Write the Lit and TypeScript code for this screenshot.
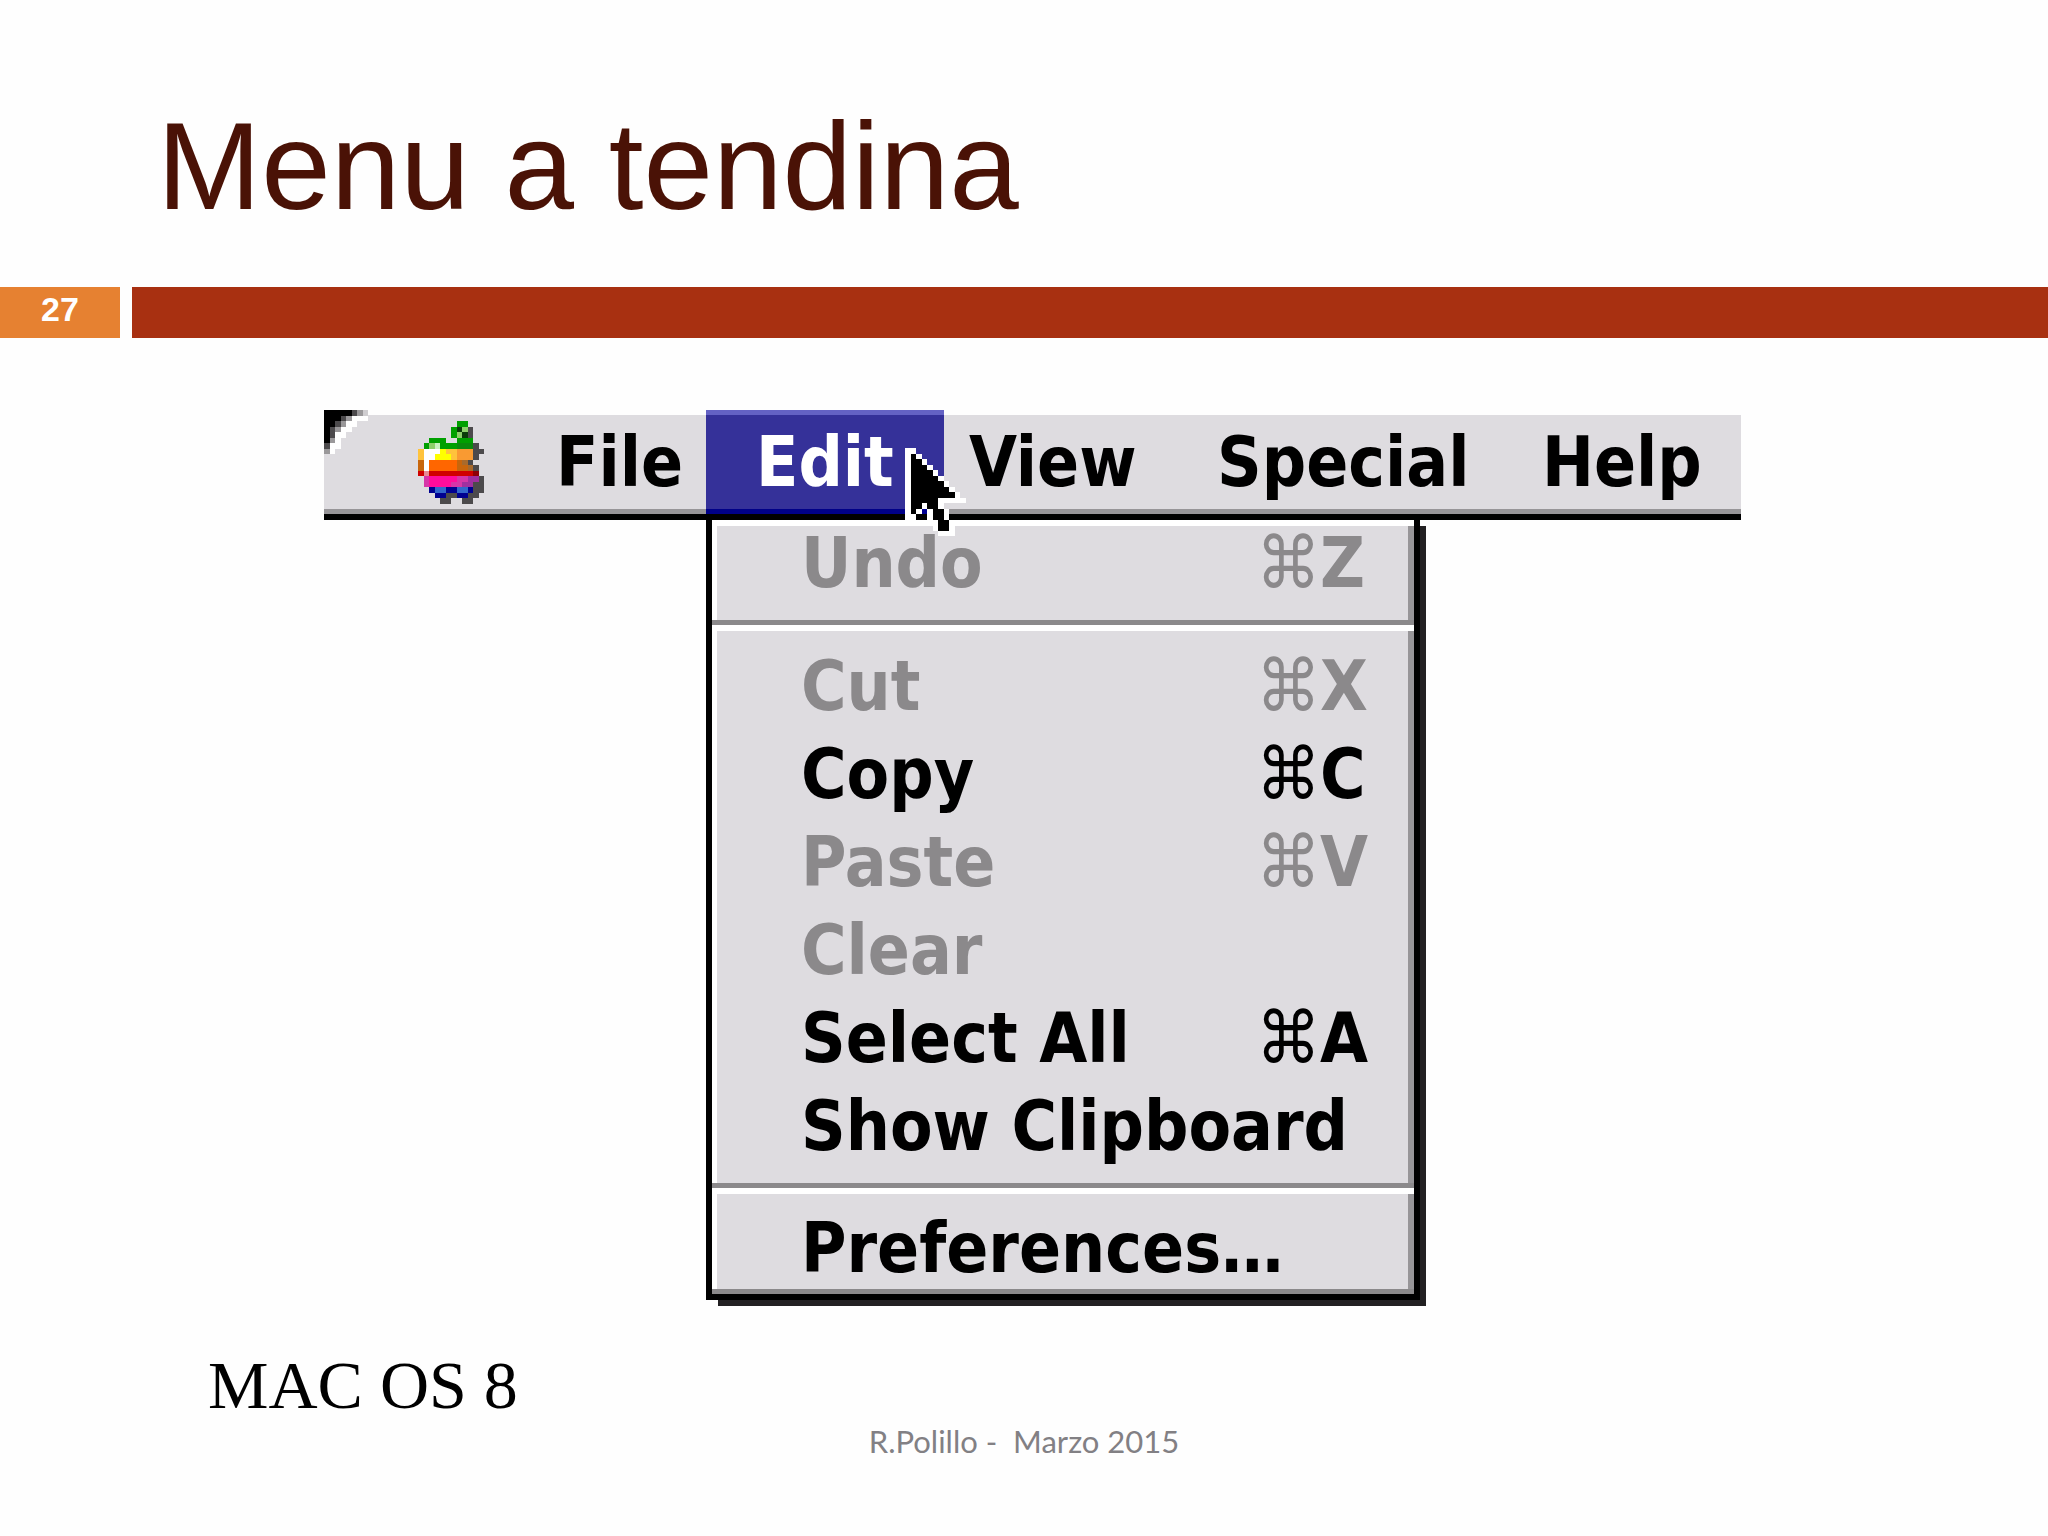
import { LitElement, html, svg, css, nothing } from "lit";
import { customElement, property } from "lit/decorators.js";

const palette: Record<string, string> = {
  B: "#000000",
  W: "#ffffff",
  d: "#4c4a4c",
  m: "#9a989a",
  l: "#cfcdd0",
  g: "#00a000",
  G: "#0a8a0c",
  h: "#0a3d0a",
  k: "#8ccf6a",
  c: "#c8f0c0",
  y: "#ffff00",
  o: "#ffc33c",
  O: "#f99a32",
  a: "#ff6600",
  n: "#c8660c",
  u: "#a86a2c",
  r: "#d00000",
  R: "#8e0008",
  p: "#e88a94",
  M: "#ff0c9c",
  v: "#d636a8",
  V: "#a030a0",
  b: "#3366cc",
  N: "#000090",
};

const apple = [
  ".......gg...",
  "......ghkd..",
  "......gkhd..",
  "..ggg..ggg..",
  ".gkcgggGGGd.",
  "oWWWyooOOOdd",
  "oWWyyyoOOOd.",
  "nWaaaaanud..",
  "nWaaaaannud.",
  "rprrrrrrrrR.",
  ".vMMMMMvvVVd",
  ".vMMMMvvVVdd",
  "..NbbNNbbNdd",
  "...NNddNNdd.",
  "....dd..dd..",
];

const pointer = [
  "WW.........",
  "WBW........",
  "WBBW.......",
  "WBBBW......",
  "WBBBBW.....",
  "WBBBBBW....",
  "WBBBBBBW...",
  "WBBBBBBBW..",
  "WBBBBBBBBW.",
  "WBBBBBWWWWW",
  "WBBWBBW....",
  "WBWNWBBW...",
  "WWBBWBBW...",
  "WWWWWWBBW..",
  ".....WBBW..",
  "......WWW..",
];

const corner = [
  "BBBBBdml",
  "BBBdmWWW",
  "BBdmWW..",
  "BdmWW...",
  "BdWW....",
  "BmW.....",
  "dWW.....",
  "mW......",
];

@customElement("pixel-art")
export class PixelArt extends LitElement {
  @property({ attribute: false }) rows: string[] = [];

  static styles = css`
    :host { display: block; }
    .art { display: block; width: 100%; height: 100%; }
  `;

  render() {
    const width = this.rows[0]?.length ?? 0;
    return html`<svg class="art" viewBox="0 0 ${width} ${this.rows.length}"
      preserveAspectRatio="none" shape-rendering="crispEdges" aria-hidden="true">
      ${this.rows.map((row, y) =>
        [...row].map((key, x) =>
          key === "." ? nothing
            : svg`<rect x=${x} y=${y} width="1" height="1" fill=${palette[key]}></rect>`))}
    </svg>`;
  }
}

interface Command {
  label: string;
  key?: string;
  disabled?: boolean;
}

const groups: Command[][] = [
  [{ label: "Undo", key: "Z", disabled: true }],
  [
    { label: "Cut", key: "X", disabled: true },
    { label: "Copy", key: "C" },
    { label: "Paste", key: "V", disabled: true },
    { label: "Clear", disabled: true },
    { label: "Select All", key: "A" },
    { label: "Show Clipboard" },
  ],
  [{ label: "Preferences…" }],
];

@customElement("mac-menu")
export class MacMenu extends LitElement {
  static styles = css`
    :host {
      display: block;
      font-family: "DejaVu Sans Condensed", "DejaVu Sans", sans-serif;
      font-weight: bold;
      font-size: 69px;
      line-height: 88px;
      color: #000;
    }
    button {
      font: inherit;
      color: inherit;
      background: none;
      border: 0;
      margin: 0;
      padding: 0;
      white-space: nowrap;
      text-align: left;
    }
    .bar {
      position: relative;
      display: flex;
      align-items: flex-end;
      height: 110px;
      box-sizing: border-box;
      border-bottom: 6px solid #000;
      background: linear-gradient(#fefefe 5px, #dedce0 5px, #dedce0 99px, #979598 99px);
    }
    .corner { position: absolute; left: 0; top: 0; width: 44px; height: 44px; }
    .bar button { height: 104px; line-height: 104px; padding: 0; box-sizing: border-box; }
    .bar .logo { padding: 0 0 0 94px; width: 179px; display: flex; align-items: center; }
    .apple { width: 66px; height: 83px; }
    .bar .file { width: 203px; padding-left: 53px; }
    .bar .edit {
      width: 238px;
      padding-left: 50px;
      color: #fff;
      background: linear-gradient(#6462c4 5px, #353199 5px, #353199 99px, #000088 99px);
    }
    .bar .view { width: 273px; padding-left: 25px; }
    .bar .special { width: 325px; }
    .pointer { position: absolute; left: 581px; top: 38px; width: 61px; height: 88px; z-index: 2; }
    .drop {
      width: 714px;
      box-sizing: border-box;
      margin-left: 382px;
      border: 6px solid #000;
      border-top: 0;
      box-shadow: 9px 9px 0 -3px #222022, 9px 3px 0 -3px #222022;
    }
    .group {
      border-top: 6px solid #fff;
      border-bottom: 5px solid #8b898b;
    }
    .items {
      background: #dedce0;
      border-left: 5px solid #fff;
      border-right: 6px solid #979598;
      padding: 11px 0 13px;
    }
    .group:first-child .items { padding: 1px 0 5px; }
    .group:last-child .items { padding: 13px 0 0; }
    .row {
      display: grid;
      grid-template-columns: 1fr 64px 52px;
      align-items: center;
      width: 100%;
      height: 88px;
      padding: 0 36px 0 84px;
    }
    .group:first-child .row { line-height: 72px; align-items: start; }
    .group:last-child .row { height: 82px; line-height: 82px; }
    .label { grid-column: 1; }
    .wide .label { grid-column: 1 / -1; }
    .command { font-weight: normal; font-size: 72px; }
    .row:disabled { color: #8b898b; }
  `;

  render() {
    return html`
      <nav class="bar" aria-label="Menu bar">
        <pixel-art class="corner" .rows=${corner}></pixel-art>
        <button class="logo" aria-label="Apple"><pixel-art class="apple" .rows=${apple}></pixel-art></button>
        <button class="file">File</button>
        <button class="edit" aria-expanded="true">Edit</button>
        <button class="view">View</button>
        <button class="special">Special</button>
        <button class="help">Help</button>
        <pixel-art class="pointer" .rows=${pointer}></pixel-art>
      </nav>
      <div class="drop">
        ${groups.map((group) => html`<div class="group"><div class="items">
          ${group.map((item) => html`<button class="row ${item.key ? "" : "wide"}" ?disabled=${item.disabled}>
            <span class="label">${item.label}</span>
            ${item.key ? html`<span class="command">⌘</span><span>${item.key}</span>` : nothing}
          </button>`)}
        </div></div>`)}
      </div>
    `;
  }
}

@customElement("app-root")
export class AppRoot extends LitElement {
  static styles = css`
    :host {
      display: flex;
      flex-direction: column;
      min-height: 100vh;
      background: #fefefe;
      overflow: hidden;
    }
    .title {
      margin: 0;
      padding: 91px 0 46px 157px;
      font: normal 125px/150px "Liberation Sans", Arial, sans-serif;
      color: #4a1206;
    }
    .band { display: flex; gap: 12px; height: 51px; }
    .number {
      width: 120px;
      background: #e68131;
      color: #fff;
      font: bold 34px/44px "Liberation Sans", Arial, sans-serif;
      text-align: center;
    }
    .rule { flex: 1; background: #a83011; }
    .figure { margin: 72px 15% 0 324px; }
    .caption {
      margin: 47px 0 0 208px;
      font: 68px/76px "Liberation Serif", "Times New Roman", serif;
      color: #000;
    }
    .footer {
      font: 31px/36px Lato, sans-serif;
      color: #828084;
      text-align: center;
      white-space: pre;
    }
  `;

  render() {
    return html`
      <h1 class="title">Menu a tendina</h1>
      <div class="band"><div class="number">27</div><div class="rule"></div></div>
      <mac-menu class="figure"></mac-menu>
      <p class="caption">MAC OS 8</p>
      <footer class="footer">R.Polillo -  Marzo 2015</footer>
    `;
  }
}
